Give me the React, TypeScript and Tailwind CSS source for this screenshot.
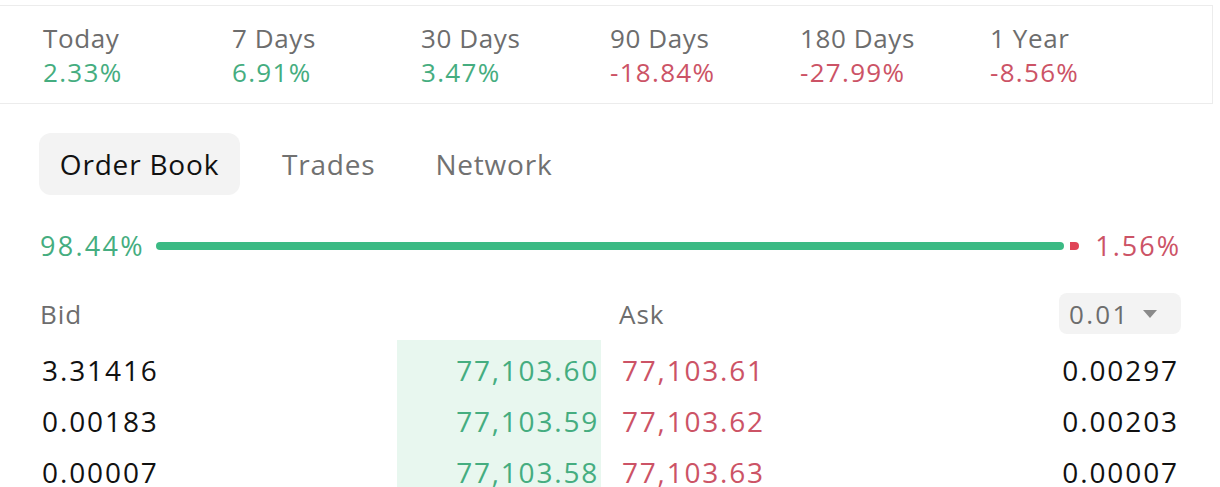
import React from 'react';

type Change = { label: string; value: string; up: boolean };

const changes: Change[] = [
  { label: 'Today', value: '2.33%', up: true },
  { label: '7 Days', value: '6.91%', up: true },
  { label: '30 Days', value: '3.47%', up: true },
  { label: '90 Days', value: '-18.84%', up: false },
  { label: '180 Days', value: '-27.99%', up: false },
  { label: '1 Year', value: '-8.56%', up: false },
];

const rows = [
  { bid: '3.31416', bidPrice: '77,103.60', askPrice: '77,103.61', ask: '0.00297' },
  { bid: '0.00183', bidPrice: '77,103.59', askPrice: '77,103.62', ask: '0.00203' },
  { bid: '0.00007', bidPrice: '77,103.58', askPrice: '77,103.63', ask: '0.00007' },
];

export default function App() {
  return (
    <div className="w-[1220px] h-[487px] overflow-hidden bg-white font-['Open_Sans',sans-serif]">
      {/* performance strip */}
      <div className="mt-[5px] mr-[7px] h-[99px] border-y border-r border-[#ececec] pl-[43px] pt-[15px]">
        <div className="grid grid-cols-[189px_189px_189px_190px_190px_190px]">
          {changes.map((c) => (
            <div key={c.label} className="flex flex-col">
              <span className="text-[26px] leading-[34px] tracking-[0.6px] text-[#6d6d6d]">{c.label}</span>
              <span
                className={`text-[26px] leading-[34px] tracking-[1.3px] ${c.up ? 'text-[#45ad80]' : 'text-[#cc5366]'}`}
              >
                {c.value}
              </span>
            </div>
          ))}
        </div>
      </div>

      {/* tabs */}
      <div className="mt-[29px] flex items-center pl-[39px]">
        <div className="flex h-[62px] w-[201px] items-center justify-center rounded-[12px] bg-[#f3f3f3] text-[28px] leading-[34px] tracking-[0.8px] text-[#111]">
          Order Book
        </div>
        <div className="ml-[42px] text-[28px] leading-[34px] tracking-[0.8px] text-[#717171]">Trades</div>
        <div className="ml-[60px] text-[28px] leading-[34px] tracking-[0.8px] text-[#717171]">Network</div>
      </div>

      {/* depth ratio */}
      <div className="mt-[34px] flex h-[34px] items-center pl-[40px] pr-[39px]">
        <span className="text-[27px] leading-[34px] tracking-[2.3px] text-[#45ad80]">98.44%</span>
        <div className="ml-[11px] h-[8px] flex-1 rounded-full bg-[#3bba84]" />
        <div className="ml-[6px] h-[8px] w-[9px] rounded-r-full rounded-l-[2px] bg-[#e04457]" />
        <span className="ml-[16px] text-[27px] leading-[34px] tracking-[2px] text-[#cc5366]">1.56%</span>
      </div>

      {/* order book */}
      <div className="mt-[30px] pl-[40px] pr-[39px]">
        <div className="flex h-[41px] items-center">
          <span className="w-[579px] text-[26px] leading-[34px] tracking-[1px] text-[#6d6d6d]">Bid</span>
          <span className="flex-1 text-[26px] leading-[34px] tracking-[1px] text-[#6d6d6d]">Ask</span>
          <div className="flex h-[41px] w-[122px] items-center gap-[12px] rounded-[8px] bg-[#f3f3f3] pl-[10px]">
            <span className="text-[26px] leading-[34px] tracking-[2.3px] text-[#6d6d6d]">0.01</span>
            <svg width="16" height="10" viewBox="0 0 16 10">
              <path d="M1 1h14L8 9z" fill="#8a8a8a" />
            </svg>
          </div>
        </div>
        <div className="mt-[6px] flex">
          <div className="w-[357px] flex flex-col">
            {rows.map((r) => (
              <div key={r.bid} className="h-[51px] pt-[9px] pl-[2px] text-[28px] leading-[42px] tracking-[1.9px] text-[#111]">
                {r.bid}
              </div>
            ))}
          </div>
          <div className="w-[204px] flex flex-col bg-[#e8f7ef] pr-[2px]">
            {rows.map((r) => (
              <div
                key={r.bidPrice}
                className="h-[51px] pt-[9px] text-right text-[28px] leading-[42px] tracking-[1.8px] text-[#45ad80]"
              >
                {r.bidPrice}
              </div>
            ))}
          </div>
          <div className="flex-1 flex flex-col pl-[21px]">
            {rows.map((r) => (
              <div key={r.askPrice} className="h-[51px] pt-[9px] text-[28px] leading-[42px] tracking-[1.8px] text-[#cc5366]">
                {r.askPrice}
              </div>
            ))}
          </div>
          <div className="flex flex-col pr-[2px]">
            {rows.map((r, i) => (
              <div key={i} className="h-[51px] pt-[9px] text-right text-[28px] leading-[42px] tracking-[1.9px] text-[#111]">
                {r.ask}
              </div>
            ))}
          </div>
        </div>
      </div>
    </div>
  );
}
